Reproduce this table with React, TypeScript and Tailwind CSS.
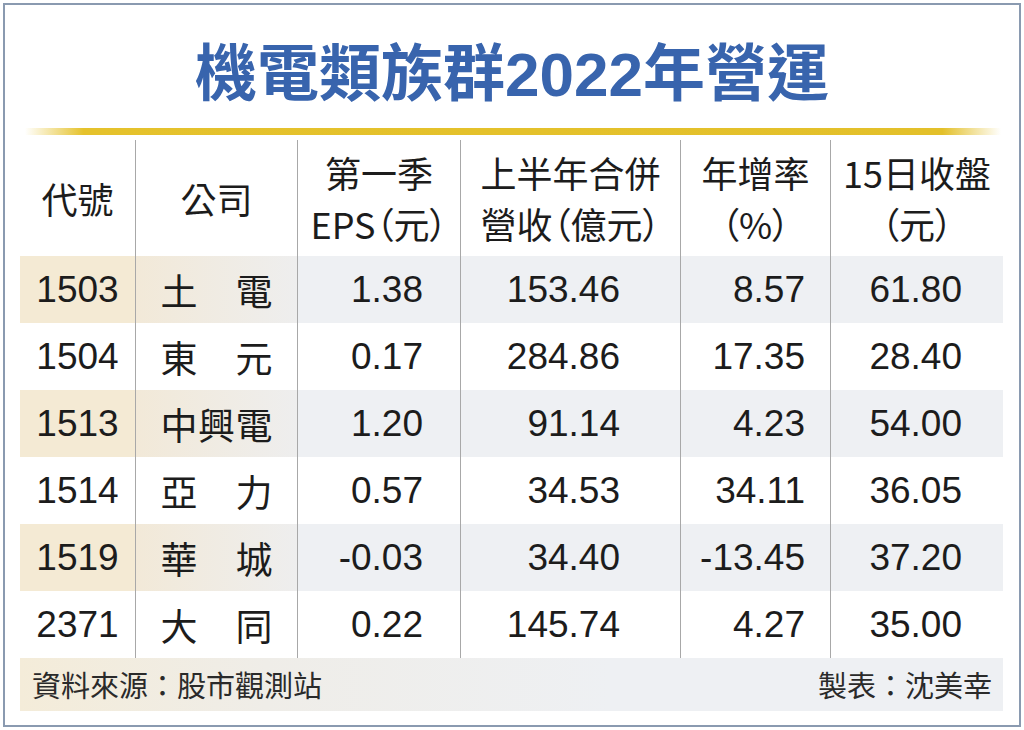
const cjk = "font-['Noto_Sans_CJK_TC','Noto_Sans_CJK_SC',sans-serif]";
const num = "font-['Liberation_Sans',Arial,sans-serif]";

const rows = [
  ["1503", "土電", "1.38", "153.46", "8.57", "61.80"],
  ["1504", "東元", "0.17", "284.86", "17.35", "28.40"],
  ["1513", "中興電", "1.20", "91.14", "4.23", "54.00"],
  ["1514", "亞力", "0.57", "34.53", "34.11", "36.05"],
  ["1519", "華城", "-0.03", "34.40", "-13.45", "37.20"],
  ["2371", "大同", "0.22", "145.74", "4.27", "35.00"],
];

const sep = "border-l border-[#a8a8a8]";

const HeadCell = ({ lines, first }: { lines: string[]; first?: boolean }) => (
  <div
    className={`flex h-[116px] flex-col items-center justify-center text-[36px] leading-[51px] text-[#1c1c1c] [font-feature-settings:'palt'] ${cjk} ${first ? "" : sep}`}
  >
    {lines.map((l) => (
      <span key={l} className="whitespace-nowrap">
        {l}
      </span>
    ))}
  </div>
);

const Row = ({ r, shaded }: { r: string[]; shaded: boolean }) => {
  const grey = shaded ? "bg-[#eef0f3]" : "";
  return (
    <>
      <div
        className={`flex h-[67px] items-center justify-center text-[37px] text-[#1c1c1c] ${num} ${shaded ? "bg-[#f4ead4]" : ""}`}
      >
        {r[0]}
      </div>
      <div
        className={`flex h-[67px] items-center justify-center ${sep} ${shaded ? "bg-[linear-gradient(90deg,#f2e9d8,#eeeeee)]" : ""}`}
      >
        <div className={`flex w-[112px] justify-between pt-[2px] text-[37px] leading-none text-[#1c1c1c] ${cjk}`}>
          {r[1].split("").map((c, i) => (
            <span key={i}>{c}</span>
          ))}
        </div>
      </div>
      <div className={`flex h-[67px] items-center justify-end pr-[37px] text-[37px] text-[#1c1c1c] ${num} ${sep} ${grey}`}>
        {r[2]}
      </div>
      <div className={`flex h-[67px] items-center justify-end pr-[60px] text-[37px] text-[#1c1c1c] ${num} ${sep} ${grey}`}>
        {r[3]}
      </div>
      <div className={`flex h-[67px] items-center justify-end pr-[25px] text-[37px] text-[#1c1c1c] ${num} ${sep} ${grey}`}>
        {r[4]}
      </div>
      <div className={`flex h-[67px] items-center justify-end pr-[41px] text-[37px] text-[#1c1c1c] ${num} ${sep} ${grey}`}>
        {r[5]}
      </div>
    </>
  );
};

export default function App() {
  return (
    <div className="h-[730px] w-[1024px] bg-white p-[3px]">
      <div className="flex h-full flex-col border-2 border-[#8a9ab0] bg-white">
        <div className="flex h-[123px] items-center justify-center pt-[10px]">
          <h1 className={`text-[62px] font-semibold leading-none text-[#3864ad] ${cjk}`}>
            機電類族群<span className={`${num} font-bold`}>2022</span>年營運
          </h1>
        </div>
        <div className="ml-[20px] mr-[18px] h-[7px] bg-[linear-gradient(90deg,rgba(230,196,40,0)_0%,#e5c22c_6%,#e3c02a_94%,rgba(230,196,40,0)_100%)]" />
        <div className="ml-[15px] mt-[5px] w-[983px]">
          <div className="grid grid-cols-[115px_162px_163px_220px_150px_173px]">
            <HeadCell lines={["代號"]} first />
            <HeadCell lines={["公司"]} />
            <HeadCell lines={["第一季", "EPS（元）"]} />
            <HeadCell lines={["上半年合併", "營收（億元）"]} />
            <HeadCell lines={["年增率", "（%）"]} />
            <HeadCell lines={["15日收盤", "（元）"]} />
            {rows.map((r, i) => (
              <Row key={r[0]} r={r} shaded={i % 2 === 0} />
            ))}
          </div>
          <div
            className={`flex h-[53px] items-center justify-between bg-[linear-gradient(90deg,#f4ecd9_0%,#efede8_25%,#eef0f3_60%,#eef0f3_100%)] pl-[12px] pr-[11px] pt-[1px] text-[29px] text-[#2a2a2a] ${cjk}`}
          >
            <span>資料來源：股市觀測站</span>
            <span>製表：沈美幸</span>
          </div>
        </div>
      </div>
    </div>
  );
}
